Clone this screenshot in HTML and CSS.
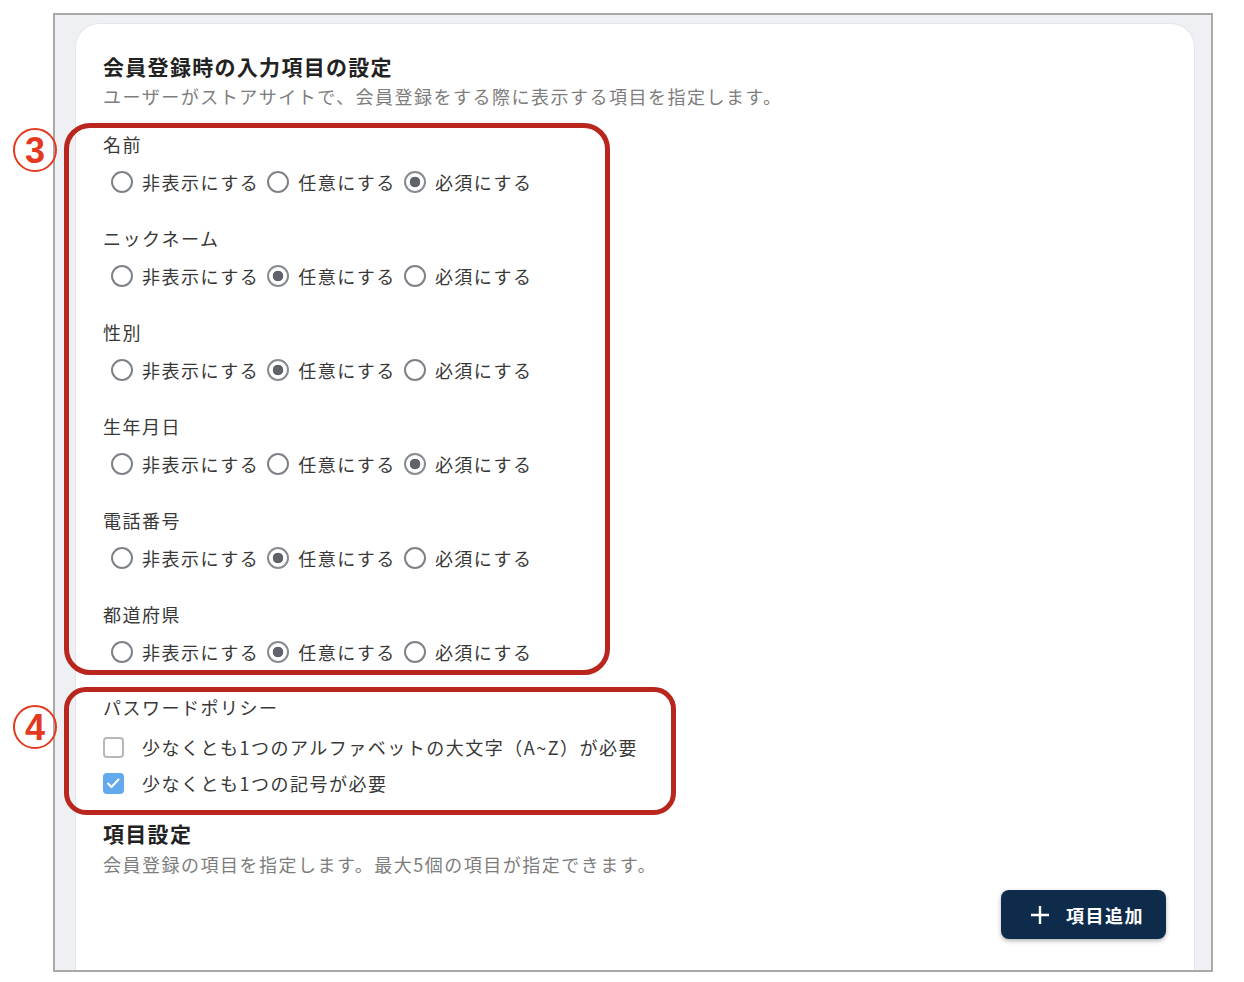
FILE: index.html
```html
<!DOCTYPE html>
<html lang="ja">
<head>
    <meta charset="UTF-8">
    <meta name="viewport" content="width=device-width, initial-scale=1.0">
    <title>会員登録時の入力項目の設定</title>
    <link rel="stylesheet" href="styles.css">
</head>
<body>
    <div class="frame">
        <div class="card">
            <h2 class="section-title">会員登録時の入力項目の設定</h2>
            <p class="section-desc">ユーザーがストアサイトで、会員登録をする際に表示する項目を指定します。</p>

            <div class="field">
                <div class="field-label">名前</div>
                <div class="radio-row">
                    <label class="opt"><input type="radio" name="name"><span>非表示にする</span></label>
                    <label class="opt"><input type="radio" name="name"><span>任意にする</span></label>
                    <label class="opt"><input type="radio" name="name" checked><span>必須にする</span></label>
                </div>
            </div>
            <div class="field">
                <div class="field-label">ニックネーム</div>
                <div class="radio-row">
                    <label class="opt"><input type="radio" name="nick"><span>非表示にする</span></label>
                    <label class="opt"><input type="radio" name="nick" checked><span>任意にする</span></label>
                    <label class="opt"><input type="radio" name="nick"><span>必須にする</span></label>
                </div>
            </div>
            <div class="field">
                <div class="field-label">性別</div>
                <div class="radio-row">
                    <label class="opt"><input type="radio" name="sex"><span>非表示にする</span></label>
                    <label class="opt"><input type="radio" name="sex" checked><span>任意にする</span></label>
                    <label class="opt"><input type="radio" name="sex"><span>必須にする</span></label>
                </div>
            </div>
            <div class="field">
                <div class="field-label">生年月日</div>
                <div class="radio-row">
                    <label class="opt"><input type="radio" name="birth"><span>非表示にする</span></label>
                    <label class="opt"><input type="radio" name="birth"><span>任意にする</span></label>
                    <label class="opt"><input type="radio" name="birth" checked><span>必須にする</span></label>
                </div>
            </div>
            <div class="field">
                <div class="field-label">電話番号</div>
                <div class="radio-row">
                    <label class="opt"><input type="radio" name="tel"><span>非表示にする</span></label>
                    <label class="opt"><input type="radio" name="tel" checked><span>任意にする</span></label>
                    <label class="opt"><input type="radio" name="tel"><span>必須にする</span></label>
                </div>
            </div>
            <div class="field">
                <div class="field-label">都道府県</div>
                <div class="radio-row">
                    <label class="opt"><input type="radio" name="pref"><span>非表示にする</span></label>
                    <label class="opt"><input type="radio" name="pref" checked><span>任意にする</span></label>
                    <label class="opt"><input type="radio" name="pref"><span>必須にする</span></label>
                </div>
            </div>

            <div class="policy">
                <div class="field-label">パスワードポリシー</div>
                <label class="check"><input type="checkbox"><span>少なくとも1つのアルファベットの大文字（A~Z）が必要</span></label>
                <label class="check"><input type="checkbox" checked><span>少なくとも1つの記号が必要</span></label>
            </div>

            <h2 class="section-title items-title">項目設定</h2>
            <p class="section-desc">会員登録の項目を指定します。最大5個の項目が指定できます。</p>

            <div class="actions">
                <button type="button" class="add-btn">
                    <svg width="20" height="20" viewBox="0 0 20 20"><path d="M10 1v18M1 10h18" stroke="#fff" stroke-width="2.4" fill="none"/></svg>
                    <span>項目追加</span>
                </button>
            </div>
        </div>
    </div>

    <!-- annotation marks drawn over the screenshot -->
    <div class="mark-box box-3"></div>
    <div class="mark-num num-3">3</div>
    <div class="mark-box box-4"></div>
    <div class="mark-num num-4">4</div>
</body>
</html>
```

FILE: styles.css
```css
body { margin: 0; background: #fff; font-family: "Noto Sans CJK JP", "Noto Sans", sans-serif; color: #383838; }
.frame { margin: 13px 0 0 53px; width: 1160px; height: 959px; border: 2px solid #a9a9a9; background: #eef0f4; padding: 8px 16px 0 20px; box-sizing: border-box; overflow: hidden; }
.card { background: #fff; border: 1px solid #e3e5ea; border-bottom: none; border-radius: 24px 24px 0 0; height: 100%; box-sizing: border-box; padding: 28px 28px 0 27px; }

.section-title { margin: 0; font-size: 21px; line-height: 28px; font-weight: 700; letter-spacing: 1.3px; color: #222; }
.section-desc { margin: 2px 0 0; font-size: 18px; line-height: 28px; letter-spacing: 1.5px; color: #7d7d7d; }

.field { margin-top: 20px; }
.field + .field { margin-top: 28px; }
.field-label { font-size: 18px; line-height: 28px; letter-spacing: 1.5px; color: #383838; }
.radio-row { display: flex; margin-top: 10px; padding-left: 8px; }
.opt { display: inline-flex; align-items: center; gap: 9px; margin-right: 8px; font-size: 18px; line-height: 28px; letter-spacing: 1.5px; color: #383838; }
.opt input { appearance: none; margin: 0; width: 22px; height: 22px; border: 2px solid #7e8288; border-radius: 50%; background: #fff; }
.opt input:checked { border-color: #888b91; background: radial-gradient(circle, #5f646c 0 5px, #fff 5.6px); }

.policy { margin-top: 27px; }
.check { display: flex; align-items: center; gap: 18px; font-size: 18px; line-height: 28px; letter-spacing: 1.5px; color: #383838; margin-top: 8px; }
.policy .field-label + .check { margin-top: 12px; }
.check input { appearance: none; margin: 0; width: 21px; height: 21px; border: 2px solid #b8b8b8; border-radius: 4px; background: #fff; }
.check input:checked { border-color: #63a9ee; background: #63a9ee url("data:image/svg+xml,%3Csvg xmlns='http://www.w3.org/2000/svg' viewBox='0 0 21 21'%3E%3Cpath d='M5 10.5l3.5 3.5 7-7.5' stroke='white' stroke-width='2' fill='none' stroke-linecap='round' stroke-linejoin='round'/%3E%3C/svg%3E") center / 21px 21px no-repeat; }

.items-title { margin-top: 22px; }
.items-title + .section-desc { margin-top: 3px; }

.actions { display: flex; justify-content: flex-end; margin-top: 12px; }
.add-btn { display: inline-flex; align-items: center; gap: 16px; height: 49px; width: 165px; padding: 0 0 0 29px; border: none; border-radius: 8px; background: #0e2b4b; color: #fff; font-family: inherit; font-size: 18px; font-weight: 700; letter-spacing: 1.5px; box-shadow: 0 2px 4px rgba(0, 0, 0, 0.3); cursor: pointer; }

.mark-box { position: absolute; border: 5px solid #b8261d; border-radius: 26px; }
.box-3 { left: 64px; top: 123px; width: 536px; height: 542px; }
.box-4 { left: 64px; top: 687px; width: 602px; height: 118px; border-radius: 22px; }
.mark-num { position: absolute; left: 13px; width: 40px; height: 40px; border: 2px solid #e5391f; border-radius: 50%; color: #e5391f; font-family: "Liberation Sans", sans-serif; font-size: 36px; font-weight: 700; line-height: 41px; text-align: center; }
.num-3 { top: 128px; }
.num-4 { top: 705px; }
```
